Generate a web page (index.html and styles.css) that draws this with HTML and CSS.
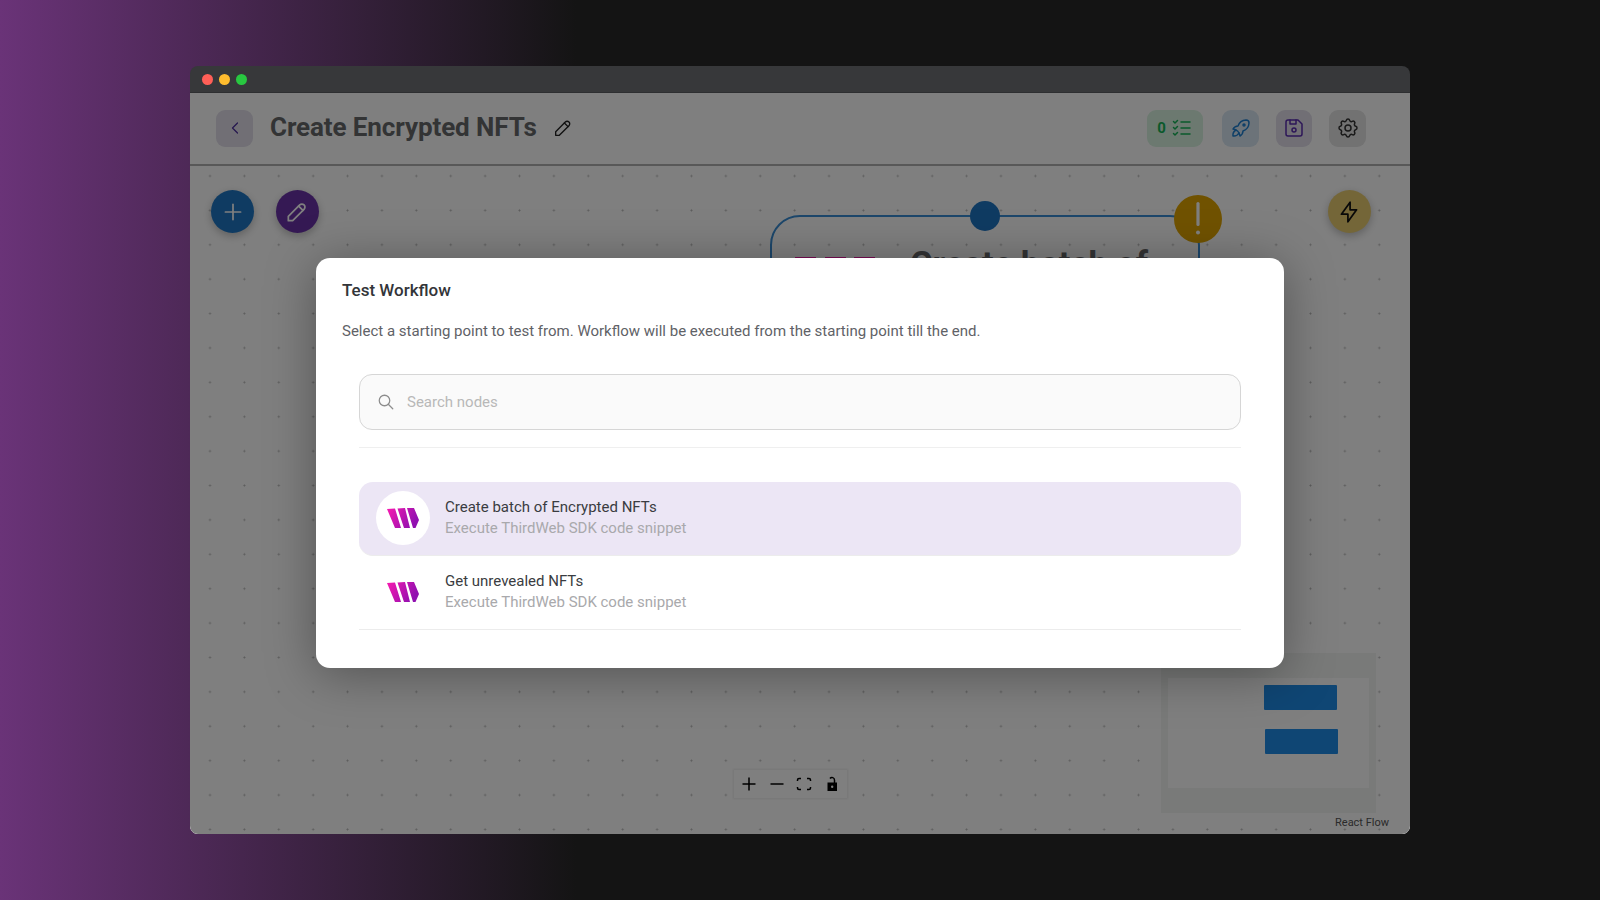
FILE: index.html
```html
<!DOCTYPE html>
<html lang="en">
<head>
    <meta charset="UTF-8">
    <meta name="viewport" content="width=device-width, initial-scale=1.0">
    <title>Create Encrypted NFTs</title>
    <link rel="stylesheet" href="styles.css">
</head>
<body>

    <svg class="defs" width="0" height="0">
        <defs>
            <linearGradient id="logo-grad" x1="0" y1="0" x2="1" y2="0.4">
                <stop offset="0" stop-color="#f81ab0"/>
                <stop offset="1" stop-color="#9010b0"/>
            </linearGradient>
        </defs>
    </svg>

    <div class="window">
        <div class="titlebar">
            <span class="light red"></span>
            <span class="light yellow"></span>
            <span class="light green"></span>
        </div>

        <div class="app">
            <!-- Top bar of the editor -->
            <header class="topbar">
                <button class="tool back">
                    <svg class="icon" viewBox="0 0 24 24"><path d="M15 6l-6 6l6 6"/></svg>
                </button>
                <h1>Create Encrypted NFTs</h1>
                <svg class="icon title-edit" viewBox="0 0 24 24"><path d="M4 20h4l10.5 -10.5a2.828 2.828 0 1 0 -4 -4l-10.5 10.5v4"/><path d="M13.5 6.5l4 4"/></svg>

                <div class="tools">
                    <button class="tool chip">
                        <span>0</span>
                        <svg class="icon" viewBox="0 0 24 24"><path d="M3.5 5.5l1.5 1.5l2.5 -2.5"/><path d="M3.5 11.5l1.5 1.5l2.5 -2.5"/><path d="M3.5 17.5l1.5 1.5l2.5 -2.5"/><path d="M11 6l9 0"/><path d="M11 12l9 0"/><path d="M11 18l9 0"/></svg>
                    </button>
                    <button class="tool rocket">
                        <svg class="icon" viewBox="0 0 24 24"><path d="M4 13a8 8 0 0 1 7 7a6 6 0 0 0 3 -5a9 9 0 0 0 6 -8a3 3 0 0 0 -3 -3a9 9 0 0 0 -8 6a6 6 0 0 0 -5 3"/><path d="M7 14a6 6 0 0 0 -3 6a6 6 0 0 0 6 -3"/><path d="M15 9m-1 0a1 1 0 1 0 2 0a1 1 0 1 0 -2 0"/></svg>
                    </button>
                    <button class="tool save">
                        <svg class="icon" viewBox="0 0 24 24"><path d="M6 4h10l4 4v10a2 2 0 0 1 -2 2h-12a2 2 0 0 1 -2 -2v-12a2 2 0 0 1 2 -2"/><path d="M12 14m-2 0a2 2 0 1 0 4 0a2 2 0 1 0 -4 0"/><path d="M14 4l0 4l-6 0l0 -4"/></svg>
                    </button>
                    <button class="tool gear">
                        <svg class="icon" viewBox="0 0 24 24"><path d="M10.325 4.317c.426 -1.756 2.924 -1.756 3.35 0a1.724 1.724 0 0 0 2.573 1.066c1.543 -.94 3.31 .826 2.37 2.37a1.724 1.724 0 0 0 1.065 2.572c1.756 .426 1.756 2.924 0 3.35a1.724 1.724 0 0 0 -1.066 2.573c.94 1.543 -.826 3.31 -2.37 2.37a1.724 1.724 0 0 0 -2.572 1.065c-.426 1.756 -2.924 1.756 -3.35 0a1.724 1.724 0 0 0 -2.573 -1.066c-1.543 .94 -3.31 -.826 -2.37 -2.37a1.724 1.724 0 0 0 -1.065 -2.572c-1.756 -.426 -1.756 -2.924 0 -3.35a1.724 1.724 0 0 0 1.066 -2.573c-.94 -1.543 .826 -3.31 2.37 -2.37c1 .608 2.296 .07 2.572 -1.065z"/><circle cx="12" cy="12" r="3"/></svg>
                    </button>
                </div>
            </header>

            <!-- React Flow canvas -->
            <main class="canvas">
                <button class="fab fab-add">
                    <svg class="icon" viewBox="0 0 24 24"><path d="M12 5v14"/><path d="M5 12h14"/></svg>
                </button>
                <button class="fab fab-edit">
                    <svg class="icon" viewBox="0 0 24 24"><path d="M4 20h4l10.5 -10.5a2.828 2.828 0 1 0 -4 -4l-10.5 10.5v4"/><path d="M13.5 6.5l4 4"/></svg>
                </button>
                <button class="fab fab-run">
                    <svg class="icon" viewBox="0 0 24 24"><path d="M13 3l0 7l6 0l-8 11l0 -7l-6 0l8 -11"/></svg>
                </button>

                <div class="node">
                    <span class="node-handle"></span>
                    <span class="node-warn">
                        <svg viewBox="0 0 8 34"><rect x="2.4" y="0" width="3.2" height="24" rx="1.6"/><circle cx="4" cy="30.500" r="2"/></svg>
                    </span>
                    <div class="node-head">
                        <span class="node-bars"><i></i><i></i><i></i></span>
                        <span class="node-title">Create batch of</span>
                    </div>
                </div>

                <div class="minimap">
                    <div class="minimap-view">
                        <span class="mini-node first"></span>
                        <span class="mini-node second"></span>
                    </div>
                </div>

                <div class="controls">
                    <svg viewBox="0 0 16 16"><path d="M8 1.500v13M1.500 8h13"/></svg>
                    <svg viewBox="0 0 16 16"><path d="M1.500 8h13"/></svg>
                    <svg viewBox="0 0 16 16"><path d="M5 2.500H3a1.500 1.500 0 0 0 -1.500 1.500v1M11 2.500h2a1.500 1.500 0 0 1 1.500 1.500v1M5 13.500H3a1.500 1.500 0 0 1 -1.500 -1.500v-1M11 13.500h2a1.500 1.500 0 0 0 1.500 -1.500v-1"/></svg>
                    <svg viewBox="0 0 16 16"><path d="M10.500 7V4a2.500 2.500 0 0 0 -4.500 -1.500"/><path class="body" fill-rule="evenodd" d="M3.500 6.500h9.500v8.500H3.500zM8.200 9.500a1.200 1.200 0 1 0 0 2.400a1.200 1.200 0 1 0 0 -2.400z"/></svg>
                </div>

                <span class="attribution">React Flow</span>
            </main>

            <!-- Test workflow dialog -->
            <div class="overlay">
                <section class="modal">
                    <h2>Test Workflow</h2>
                    <p class="modal-desc">Select a starting point to test from. Workflow will be executed from the starting point till the end.</p>

                    <div class="modal-body">
                        <div class="search">
                            <svg class="icon" viewBox="0 0 24 24"><circle cx="10" cy="10" r="7"/><path d="M21 21l-6 -6"/></svg>
                            <input type="text" placeholder="Search nodes">
                        </div>

                        <div class="node-list">
                            <div class="node-row active">
                                <span class="avatar">
                                    <svg viewBox="0 0 32 20"><path fill="url(#logo-grad)" d="M0 1L8 0.500L14 20H8zM10.500 0.500L18 0L23 20H17zM20 0H27L32 12L28.500 20H26z"/></svg>
                                </span>
                                <div class="row-text">
                                    <div class="row-name">Create batch of Encrypted NFTs</div>
                                    <div class="row-sub">Execute ThirdWeb SDK code snippet</div>
                                </div>
                            </div>
                            <div class="node-row">
                                <span class="avatar">
                                    <svg viewBox="0 0 32 20"><path fill="url(#logo-grad)" d="M0 1L8 0.500L14 20H8zM10.500 0.500L18 0L23 20H17zM20 0H27L32 12L28.500 20H26z"/></svg>
                                </span>
                                <div class="row-text">
                                    <div class="row-name">Get unrevealed NFTs</div>
                                    <div class="row-sub">Execute ThirdWeb SDK code snippet</div>
                                </div>
                            </div>
                        </div>
                    </div>
                </section>
            </div>
        </div>
    </div>

</body>
</html>
```

FILE: styles.css
```css
* {
    box-sizing: border-box;
}
html, body {
    height: 100%;
}
body {
    margin: 0;
    padding: 66px 190px;
    font-family: Roboto, "Liberation Sans", sans-serif;
    background: linear-gradient(90deg, #6a3378 0, #141414 36%);
    overflow: hidden;
}
button {
    border: none;
    padding: 0;
    font-family: inherit;
}
.defs {
    position: absolute;
}
.icon {
    display: block;
    fill: none;
    stroke: currentColor;
    stroke-width: 2;
    stroke-linecap: round;
    stroke-linejoin: round;
}

/* Window */
.window {
    height: 768px;
    display: flex;
    flex-direction: column;
    border-radius: 8px;
    overflow: hidden;
}
.titlebar {
    height: 27px;
    flex: none;
    display: flex;
    align-items: center;
    gap: 6px;
    padding-left: 12px;
    background-color: #37383a;
    border-bottom: 1px solid #2e2f31;
}
.light {
    width: 11px;
    height: 11px;
    border-radius: 50%;
}
.red { background-color: #ff5f57; }
.yellow { background-color: #febc2e; }
.green { background-color: #28c840; }

.app {
    position: relative;
    flex: 1;
    display: flex;
    flex-direction: column;
    background-color: #fff;
}

/* Top bar */
.topbar {
    height: 73px;
    flex: none;
    display: flex;
    align-items: center;
    padding: 0 44px 0 26px;
    border-bottom: 2px solid #b0b0b0;
}
.topbar h1 {
    margin: 0 0 4px 17px;
    font-size: 26px;
    font-weight: 700;
    letter-spacing: -0.1px;
    color: #66686a;
}
.title-edit {
    width: 22px;
    height: 22px;
    margin-left: 15px;
    margin-bottom: 2px;
    color: #222;
    stroke-width: 1.5;
}
.tools {
    margin-left: auto;
    display: flex;
    gap: 17px;
}
.tool {
    width: 37px;
    height: 37px;
    display: flex;
    align-items: center;
    justify-content: center;
    padding-bottom: 1px;
    border-radius: 9px;
}
.tool .icon {
    width: 24px;
    height: 24px;
    stroke-width: 1.5;
}
.back {
    background-color: #e2dfea;
    color: #4d2f9f;
}
.back .icon {
    width: 20px;
    height: 20px;
}
.chip {
    width: 56px;
    margin-right: 2px;
    gap: 4px;
    padding-left: 1px;
    background-color: #d8f3e0;
    color: #14b356;
    font-size: 15px;
    font-weight: 700;
}
.rocket {
    background-color: #d8e6f2;
    color: #1e7fd0;
}
.save {
    width: 36px;
    background-color: #e2dfea;
    color: #5a2cb0;
}
.gear {
    background-color: #e4e4e4;
    color: #333;
}

/* Canvas */
.canvas {
    position: relative;
    flex: 1;
    background-color: #fff;
    background-image: radial-gradient(circle, #b8b8b8 0.8px, transparent 1.2px);
    background-size: 34.400px 34.400px;
    background-position: 2.800px -7.200px;
    overflow: hidden;
}
.fab {
    position: absolute;
    top: 24px;
    width: 43px;
    height: 43px;
    display: flex;
    align-items: center;
    justify-content: center;
    border-radius: 50%;
    box-shadow: 0 3px 8px rgba(0, 0, 0, 0.25);
}
.fab .icon {
    width: 26px;
    height: 26px;
    stroke-width: 1.6;
}
.fab-add {
    left: 21px;
    background-color: #1e76c4;
    color: #fff;
}
.fab-edit {
    left: 85.500px;
    background-color: #6a33a8;
    color: #fff;
}
.fab-run {
    left: 1137.500px;
    background-color: #e8cc70;
    color: #111;
}

.node {
    position: absolute;
    left: 580px;
    top: 49px;
    width: 430px;
    height: 300px;
    border: 2px solid #3a8fd6;
    border-radius: 30px;
}
.node-handle {
    position: absolute;
    left: 198px;
    top: -16px;
    width: 30px;
    height: 30px;
    border-radius: 50%;
    background-color: #1e76c4;
}
.node-warn {
    position: absolute;
    left: 402px;
    top: -22px;
    width: 48px;
    height: 48px;
    display: flex;
    align-items: center;
    justify-content: center;
    border-radius: 50%;
    background-color: #e0a500;
}
.node-warn svg {
    width: 8px;
    height: 34px;
    fill: #fff;
}
.node-head {
    display: flex;
    align-items: flex-start;
    padding: 27px 0 0 23px;
}
.node-bars {
    display: flex;
    gap: 8.500px;
    margin-top: 13px;
}
.node-bars i {
    width: 21px;
    height: 20px;
    background-color: #f21aa8;
}
.node-title {
    margin-left: 35px;
    font-size: 34.500px;
    line-height: 40px;
    font-weight: 700;
    color: #66686a;
    white-space: nowrap;
}

/* Minimap */
.minimap {
    position: absolute;
    left: 971px;
    top: 487px;
    width: 215px;
    height: 160px;
    padding-top: 25px;
    padding-left: 7px;
    background-color: #f2f5f2;
}
.minimap-view {
    position: relative;
    width: 201px;
    height: 110px;
    background-color: #fff;
}
.mini-node {
    position: absolute;
    width: 73px;
    height: 25px;
    background-color: #1e8de8;
    border-radius: 1px;
}
.mini-node.first {
    left: 96px;
    top: 7px;
}
.mini-node.second {
    left: 97px;
    top: 51px;
}

.controls {
    position: absolute;
    left: 544px;
    top: 604px;
    width: 113px;
    height: 28px;
    display: flex;
    align-items: center;
    justify-content: space-between;
    padding: 0 7px;
    background-color: #fefefe;
    box-shadow: 0 0 2px 1px rgba(0, 0, 0, 0.08);
}
.controls svg {
    width: 16px;
    height: 16px;
    fill: none;
    stroke: #000;
    stroke-width: 1.500;
}
.controls .body {
    fill: #000;
    stroke: none;
}
.attribution {
    position: absolute;
    right: 21px;
    bottom: 4px;
    font-size: 11px;
    line-height: 14px;
    color: #555;
}

/* Dialog */
.overlay {
    position: absolute;
    inset: 0;
    display: flex;
    align-items: center;
    justify-content: center;
    background-color: rgba(0, 0, 0, 0.5);
}
.modal {
    width: 968px;
    height: 410px;
    margin-bottom: 2px;
    padding: 21px 26px 0;
    background-color: #fff;
    border-radius: 14px;
    box-shadow: 0 6px 50px rgba(0, 0, 0, 0.35);
}
.modal h2 {
    margin: 0;
    font-size: 17px;
    line-height: 22px;
    font-weight: 500;
    color: #333539;
}
.modal-desc {
    margin: 19px 0 0;
    font-size: 15px;
    line-height: 22px;
    color: #5f6267;
}
.modal-body {
    padding: 32px 17px 0;
}
.search {
    height: 56px;
    display: flex;
    align-items: center;
    padding: 1px 17px 0;
    gap: 12px;
    background-color: #fafafa;
    border: 1.500px solid #d6d6d6;
    border-radius: 13px;
}
.search .icon {
    width: 18px;
    height: 18px;
    color: #8d8d8d;
    stroke-width: 1.700;
}
.search input {
    flex: 1;
    border: none;
    outline: none;
    background: none;
    padding: 0;
    font-family: inherit;
    font-size: 15px;
}
.search input::placeholder {
    color: #b8b8b8;
    opacity: 1;
}
.node-list {
    margin-top: 17px;
    padding-top: 34px;
    border-top: 1px solid #efefef;
}
.node-row {
    height: 74px;
    display: flex;
    align-items: center;
    gap: 15px;
    padding: 0 17px;
    border-bottom: 1px solid #ececec;
}
.node-row.active {
    background-color: #ece6f5;
    border-radius: 14px;
}
.avatar {
    width: 54px;
    height: 54px;
    flex: none;
    display: flex;
    align-items: center;
    justify-content: center;
    border-radius: 50%;
    background-color: #fff;
}
.avatar svg {
    width: 32px;
    height: 20px;
}
.row-name {
    font-size: 15px;
    line-height: 21px;
    color: #3a3c41;
}
.row-sub {
    font-size: 15px;
    line-height: 21px;
    color: #a9a9ac;
}
```
